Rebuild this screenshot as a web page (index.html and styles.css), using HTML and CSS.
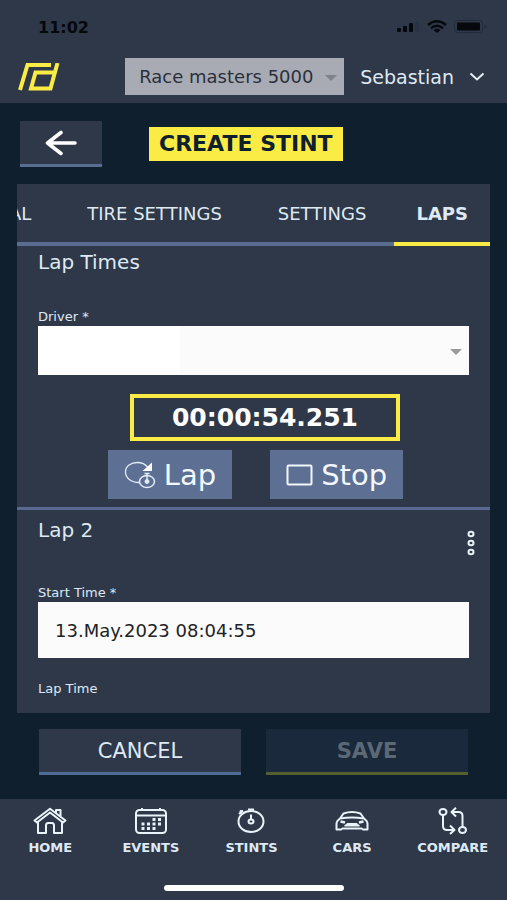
FILE: index.html
```html
<!DOCTYPE html>
<html lang="en">
<head>
<meta charset="utf-8">
<meta name="viewport" content="width=device-width, initial-scale=1">
<title>Create Stint</title>
<link rel="stylesheet" href="styles.css">
</head>
<body>
<header class="top">
  <div class="status">
    <span class="clock">11:02</span>
    <svg class="status-icons" width="92" height="16" viewBox="0 0 92 16" aria-hidden="true">
      <rect x="1" y="9" width="4" height="4" rx="1"/><rect x="7" y="7" width="4" height="6" rx="1"/><rect x="13" y="4" width="4" height="9" rx="1"/><rect x="19" y="2" width="4" height="11" rx="1" fill="#283344"/>
      <g fill="none" stroke="#05080d" stroke-width="2.4"><path d="M32 6Q41 -1.500 50 6"/><path d="M35 9.200Q41 4.500 47 9.200"/></g><path d="M37.500 11Q41 8.500 44.500 11L41 14Z"/>
      <rect x="58.500" y="1.500" width="28" height="12" rx="3" fill="none" stroke="#222b39"/><rect x="61" y="3.500" width="23" height="8" rx="1"/><path d="M88.500 5.500v4q2-.5 2-2t-2-2z" fill="#222b39"/>
    </svg>
  </div>
  <div class="bar">
    <a class="logo" href="#" aria-label="Home page">
      <svg width="42" height="28" viewBox="0 0 42 28" fill="none" stroke="#fbec45" stroke-width="4"><path d="M2 27L9.500 2H33"/><path d="M39.500 0L32.500 25.500H13L17.500 9.500H36"/></svg>
    </a>
    <div class="select team">
      <select aria-label="Team"><option>Race masters 5000</option></select>
    </div>
    <button class="user" type="button">Sebastian
      <svg width="16" height="10" viewBox="0 0 16 10" fill="none" stroke="#e6eef7" stroke-width="2"><path d="M1.500 1.500L8 7.500L14.500 1.500"/></svg>
    </button>
  </div>
</header>

<main class="page">
  <div class="heading">
    <button class="back" type="button" aria-label="Back">
      <svg width="32" height="26" viewBox="0 0 32 26" fill="none" stroke="#fff" stroke-width="3.600" stroke-linecap="round" stroke-linejoin="round"><path d="M30 13H2.500M16 2.500L2.500 13L16 23.500"/></svg>
    </button>
    <h1>CREATE STINT</h1>
  </div>

  <form class="card">
    <div class="tabs" role="tablist">
      <button type="button" role="tab">GENERAL</button>
      <button type="button" role="tab">TIRE SETTINGS</button>
      <button type="button" role="tab">SETTINGS</button>
      <button type="button" role="tab" class="active" aria-selected="true">LAPS</button>
    </div>
    <section class="section times">
      <h2>Lap Times</h2>
      <label for="driver">Driver *</label>
      <div class="select driver">
        <select id="driver"><option></option></select>
      </div>
      <output class="timer">00:00:54.251</output>
      <div class="controls">
        <button type="button">
          <svg width="32" height="28" viewBox="0 0 32 28" fill="none" stroke="#e3edf8"><path stroke-width="1.300" d="M15 21.500C7 21.500 1.500 17 1.500 11S7 1.500 13.500 1.500c5 0 8 2 10 4.500"/><path fill="#fff" stroke="none" d="M28 1.500V10H18.500Z"/><ellipse cx="23" cy="20.500" rx="7.500" ry="6" stroke-width="1.500"/><path stroke-width="1.400" d="M20.500 12.500h5M23 12.500v8"/><circle cx="23" cy="20.500" r="2" fill="#e3edf8"/></svg>
          Lap</button>
        <button type="button">
          <svg width="27" height="22" viewBox="0 0 27 22" fill="none" stroke="#f2f7fc" stroke-width="2"><rect x="1.500" y="1.500" width="24" height="19" rx="1"/></svg>
          Stop</button>
      </div>
    </section>
    <section class="section lap">
      <div class="lap-head">
        <h2>Lap 2</h2>
        <button class="more" type="button" aria-label="Lap options">
          <svg width="8" height="26" viewBox="0 0 8 26" fill="none" stroke="#e6f1f8" stroke-width="2"><ellipse cx="4" cy="4" rx="2.500" ry="2.200"/><ellipse cx="4" cy="13" rx="2.500" ry="2.200"/><ellipse cx="4" cy="22" rx="2.500" ry="2.200"/></svg>
        </button>
      </div>
      <label for="start">Start Time *</label>
      <input id="start" type="text" value="13.May.2023 08:04:55">
      <p class="field-name">Lap Time</p>
    </section>
  </form>

  <div class="actions">
    <button type="button">CANCEL</button>
    <button type="button" class="save" disabled>SAVE</button>
  </div>
</main>

<footer class="bottom">
  <nav>
    <a href="#"><svg width="34" height="28" viewBox="0 0 34 28"><path d="M1.500 13.500L17 1.800L32.500 13.500L30 15.500L17 5.500L4 15.500ZM5 15V26H13V18.500Q13 16 15 16H19Q21 16 21 18.500V26H29V15M23 6V3H27.500V9.500"/></svg>HOME</a>
    <a href="#"><svg width="34" height="28" viewBox="0 0 34 28"><rect x="2" y="3" width="30" height="23" rx="3.500"/><path d="M2 8.500H32M8 1V4M26 1V4"/><path stroke-width="3" stroke-dasharray="3 2.500" d="M18.500 12.500H28M7.500 17H28M7.500 21.500H22"/></svg>EVENTS</a>
    <a href="#"><svg width="34" height="28" viewBox="0 0 34 28"><ellipse cx="17" cy="14.500" rx="12.500" ry="10.500"/><path d="M14 2.500H20M17 2.500V4M17 7.500V12.500M5 7L9 3.500M6 3.500L9 7"/><ellipse cx="17" cy="14.500" rx="2.500" ry="2"/></svg>STINTS</a>
    <a href="#"><svg width="34" height="28" viewBox="0 0 34 28"><path d="M5 11.500L8.500 6.500Q17 3.500 25.500 6.500L29 11.500M5 11.500Q17 9.500 29 11.500Q32.500 14 32.500 17V22.500H28L26.500 21.500H7.500L6 22.500H1.500V17Q1.500 14 5 11.500Z"/><path stroke-width="2.500" d="M5.500 14.500L10 15.500M28.500 14.500L24 15.500"/><path fill="#eaf3fb" stroke-width="1" d="M12 16.500H22L24.500 19H9.500Z"/></svg>CARS</a>
    <a href="#"><svg width="34" height="28" viewBox="0 0 34 28"><ellipse cx="7" cy="5" rx="3.500" ry="3"/><ellipse cx="26.500" cy="23" rx="3.500" ry="3"/><path d="M7 8V19Q7 23 11 23H18M14 18.500L18.500 23L14 27M26.500 20V9Q26.500 5 22.500 5H16M20 .8L15.500 5L20 9.500"/></svg>COMPARE</a>
  </nav>
  <div class="indicator"></div>
</footer>
</body>
</html>
```
FILE: styles.css
```css
* { box-sizing: border-box; }

body {
  margin: 0;
  min-height: 100vh;
  display: flex;
  flex-direction: column;
  background: #0f1f2e;
  color: #dfe9f4;
  font-family: "DejaVu Sans", sans-serif;
}

button, input, select { font: inherit; color: inherit; border: 0; border-radius: 0; margin: 0; }
button { background: none; padding: 0; white-space: nowrap; }
svg { display: block; flex: none; }
h1, h2, p { margin: 0; }

.top { background: #2e3848; }

.status {
  display: flex;
  justify-content: space-between;
  align-items: center;
  height: 54px;
  padding: 0 19px 0 38px;
}
.clock { font-size: 16px; font-weight: 700; color: #05080d; }
.status-icons { fill: #05080d; }

.bar {
  display: flex;
  align-items: center;
  gap: 16px;
  height: 49px;
  padding: 0 22px 4px 18px;
}
.logo { margin-right: auto; }

.select { position: relative; }
.select::after {
  content: "";
  position: absolute;
  right: 7px;
  top: 50%;
  margin-top: -2px;
  border: 6px solid transparent;
  border-top-color: #999;
  border-bottom: 0;
  pointer-events: none;
}
.select select { appearance: none; display: block; width: 100%; }
.team { width: 219px; }
.team select {
  height: 37px;
  padding: 0 20px 0 14px;
  background: #a8abb4;
  color: #2a303b;
  font-size: 18px;
}
.team::after { border-top-color: #7f828a; }

.user { display: flex; align-items: center; gap: 15px; font-size: 19px; }

.page { flex: 1; display: flex; flex-direction: column; padding: 18px 17px 24px; }

.heading { display: flex; align-items: center; gap: 47px; padding-left: 3px; margin-bottom: 17px; }
.back {
  display: grid;
  place-items: center;
  width: 82px;
  height: 46px;
  background: #2e3848;
  border-bottom: 3px solid #5a6d90;
}
h1 {
  padding: 0 10px;
  background: #fbec45;
  color: #0f1f2e;
  font-size: 22px;
  line-height: 34px;
}

.card { flex: 1; background: #2e3848; }

.tabs { display: flex; justify-content: flex-end; overflow: hidden; }
.tabs button {
  flex: none;
  height: 62px;
  padding: 0 28px;
  border-bottom: 4px solid #5a6d90;
  font-size: 18px;
}
.tabs .active { padding: 0 22px; border-color: #fbec45; font-weight: 700; }

.section { padding: 0 21px; }
h2 { font-size: 20px; font-weight: 400; line-height: 32px; }
label, .field-name { display: block; font-size: 13px; line-height: 18px; }

.times { padding-bottom: 8px; border-bottom: 3px solid #5a6790; }
.times label { margin-top: 30px; }
.driver select { height: 49px; background: linear-gradient(90deg, #fff 142px, #fbfbfb 142px); }

.timer {
  display: block;
  width: 270px;
  margin: 19px 69px 9px auto;
  border: 4px solid #fbec45;
  color: #fff;
  font-size: 25px;
  font-weight: 700;
  line-height: 39px;
  text-align: center;
}

.controls { display: flex; justify-content: center; gap: 38px; padding-left: 4px; }
.controls button {
  display: flex;
  align-items: center;
  gap: 8px;
  height: 49px;
  padding: 0 16px;
  background: #5d6f93;
  color: #f2f7fc;
  font-size: 29px;
}

.lap { padding-top: 4px; padding-bottom: 15px; }
.lap-head { display: flex; justify-content: space-between; }
.more { align-self: flex-start; margin-top: 16px; padding-right: 15px; margin-right: -21px; }
.lap label { margin-top: 28px; }
.lap input {
  width: 100%;
  height: 56px;
  padding: 0 17px;
  background: #fbfbfb;
  color: #202226;
  font-size: 18px;
}
.field-name { margin-top: 22px; }

.actions { display: grid; grid-template-columns: 1fr 1fr; gap: 25px; padding: 0 22px; margin-top: 16px; }
.actions button {
  height: 46px;
  background: #2e3848;
  border-bottom: 3px solid #506a96;
  font-size: 21px;
}
.actions .save { background: #1a293b; border-color: #54602f; color: #5b6876; font-weight: 700; }

.bottom { background: #2e3848; padding: 8px 0 9px; }
nav { display: grid; grid-template-columns: repeat(5, 1fr); padding-right: 4px; }
nav a {
  display: flex;
  flex-direction: column;
  align-items: center;
  gap: 4px;
  color: #dfe9f4;
  font-size: 13px;
  font-weight: 700;
  line-height: 18px;
  text-decoration: none;
}
nav svg { fill: none; stroke: #eaf3fb; stroke-width: 2; stroke-linejoin: round; }
.indicator { width: 180px; height: 6px; margin: 28px auto 0; border-radius: 3px; background: #fff; }
```
